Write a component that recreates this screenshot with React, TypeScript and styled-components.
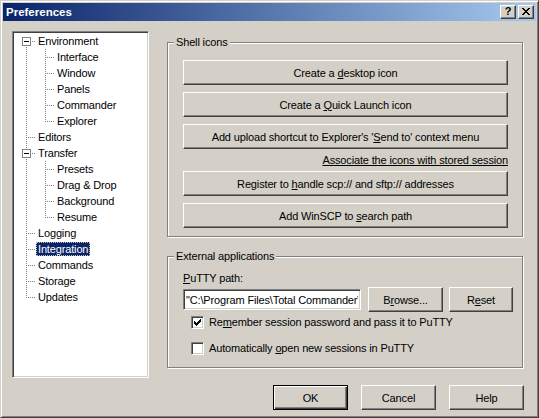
import React from "react";
import styled, { createGlobalStyle } from "styled-components";

const FACE = "#D4D0C8";
const SHADOW = "#808080";
const DARK = "#404040";

const Global = createGlobalStyle`
  html, body { margin: 0; padding: 0; background: ${FACE}; }
  body {
    font-family: "Liberation Sans", Arial, sans-serif;
    font-size: 11px;
    letter-spacing: -0.15px;
    color: #000;
  }
  * { box-sizing: border-box; }
`;

const Window = styled.div`
  width: 539px;
  height: 418px;
  background: ${FACE};
  border: 1px solid;
  border-color: ${FACE} ${DARK} ${DARK} ${FACE};
  box-shadow: inset 1px 1px #fff, inset -1px -1px ${SHADOW};
  padding: 2px;
  display: flex;
  flex-direction: column;
`;

const TitleBar = styled.div`
  height: 18px;
  flex: none;
  display: flex;
  align-items: center;
  padding: 0 2px 0 3px;
  background: linear-gradient(to right, #0a246a, #a6caf0);
`;

const Title = styled.span`
  color: #fff;
  font-weight: bold;
  font-size: 11.5px;
  letter-spacing: 0;
  line-height: 14px;
`;

const CaptionButtons = styled.div`
  margin-left: auto;
  display: flex;
  gap: 2px;
`;

const CaptionButton = styled.div`
  width: 16px;
  height: 14px;
  display: flex;
  align-items: center;
  justify-content: center;
  background: ${FACE};
  border: 1px solid;
  border-color: #fff ${DARK} ${DARK} #fff;
  box-shadow: inset -1px -1px ${SHADOW};
  font-weight: bold;
  font-size: 11px;
  letter-spacing: 0;
  line-height: 11px;
  padding-bottom: 1px;
`;

const Body = styled.div`
  flex: 1;
  display: flex;
  flex-direction: column;
`;

const Main = styled.div`
  display: flex;
  align-items: flex-start;
  gap: 18px;
  padding: 10px 13px 0 9px;
`;

const Tree = styled.div`
  width: 137px;
  height: 347px;
  flex: none;
  background: #fff;
  border: 1px solid;
  border-color: ${SHADOW} #fff #fff ${SHADOW};
  box-shadow: inset 1px 1px ${DARK}, inset -1px -1px ${FACE};
  padding: 1px 0 0 4px;
`;

const TreeRow = styled.div`
  display: flex;
  align-items: center;
  height: 16px;
`;

const Cell = styled.span<{ $up: boolean; $down: boolean; $across: boolean }>`
  position: relative;
  width: 19px;
  height: 16px;
  flex: none;

  &::before {
    content: "";
    position: absolute;
    left: 9px;
    width: 1px;
    top: ${(p) => (p.$up ? 0 : 8)}px;
    bottom: ${(p) => (p.$down ? 0 : 8)}px;
    background-image: linear-gradient(to bottom, ${SHADOW} 1px, transparent 1px);
    background-size: 1px 2px;
  }

  &::after {
    content: "";
    display: ${(p) => (p.$across ? "block" : "none")};
    position: absolute;
    left: 9px;
    right: 0;
    top: 8px;
    height: 1px;
    background-image: linear-gradient(to right, ${SHADOW} 1px, transparent 1px);
    background-size: 2px 1px;
  }
`;

const Expander = styled.span`
  position: absolute;
  left: 5px;
  top: 4px;
  width: 9px;
  height: 9px;
  z-index: 1;
  border: 1px solid ${SHADOW};
  background: linear-gradient(#000, #000) center / 5px 1px no-repeat, #fff;
`;

const NodeLabel = styled.span<{ $selected?: boolean }>`
  display: inline-block;
  padding: 0 2px;
  line-height: 14px;
  height: 14px;
  white-space: nowrap;
  color: ${(p) => (p.$selected ? "#fff" : "#000")};
  background: ${(p) => (p.$selected ? "#0a246a" : "transparent")};
  outline: ${(p) => (p.$selected ? "1px dotted #c8c0a0" : "none")};
  outline-offset: -1px;
`;

const Pages = styled.div`
  width: 356px;
  flex: none;
  margin-top: 11px;
  display: flex;
  flex-direction: column;
`;

const Group = styled.div<{ $pad: string }>`
  position: relative;
  border: 1px solid ${SHADOW};
  box-shadow: inset 1px 1px #fff, 1px 1px #fff;
  padding: ${(p) => p.$pad};
  display: flex;
  flex-direction: column;

  & + & {
    margin-top: 19px;
  }
`;

const GroupCaption = styled.span`
  position: absolute;
  top: -7px;
  left: 6px;
  padding: 0 2px;
  line-height: 13px;
  background: ${FACE};
`;

const PushButton = styled.button<{ $width?: number; $default?: boolean }>`
  height: 25px;
  width: ${(p) => (p.$width ? `${p.$width}px` : "auto")};
  flex: none;
  padding: 0;
  margin: 0;
  font: inherit;
  letter-spacing: inherit;
  color: #000;
  background: ${FACE};
  border: 1px solid;
  border-color: ${(p) => (p.$default ? "#000" : `#fff ${DARK} ${DARK} #fff`)};
  box-shadow: ${(p) =>
    p.$default
      ? `inset 1px 1px #fff, inset -1px -1px ${DARK}, inset -2px -2px ${SHADOW}`
      : `inset -1px -1px ${SHADOW}`};
  text-align: center;
  cursor: default;

  & + & {
    margin-top: 7px;
  }
`;

const LinkRow = styled.div`
  height: 22px;
  display: flex;
  align-items: center;
  justify-content: flex-end;
`;

const LinkText = styled.span`
  text-decoration: underline;
  line-height: 13px;
`;

const Key = styled.span`
  text-decoration: underline;
`;

const FieldLabel = styled.div`
  height: 13px;
  line-height: 13px;
`;

const PathRow = styled.div`
  display: flex;
  align-items: center;
  height: 25px;
  margin-top: 2px;

  & > ${PushButton} {
    margin-top: 0;
  }
`;

const PathEdit = styled.input`
  width: 178px;
  height: 21px;
  margin: 0 7px 0 0;
  padding: 0 2px;
  font: inherit;
  letter-spacing: inherit;
  color: #000;
  background: #fff;
  border: 1px solid;
  border-color: ${SHADOW} #fff #fff ${SHADOW};
  box-shadow: inset 1px 1px ${DARK}, inset -1px -1px ${FACE};
  outline: none;
`;

const ResetButton = styled(PushButton)`
  margin-left: 6px;
`;

const CheckList = styled.div`
  display: flex;
  flex-direction: column;
  gap: 9px;
  margin-top: 2px;
`;

const CheckRow = styled.label`
  display: flex;
  align-items: center;
  height: 17px;
  padding-left: 8px;
`;

const CheckBox = styled.span`
  width: 13px;
  height: 13px;
  flex: none;
  display: flex;
  align-items: center;
  justify-content: center;
  background: #fff;
  border: 1px solid;
  border-color: ${SHADOW} #fff #fff ${SHADOW};
  box-shadow: inset 1px 1px ${DARK}, inset -1px -1px ${FACE};
`;

const CheckText = styled.span`
  margin-left: 5px;
  line-height: 13px;
`;

const Footer = styled.div`
  display: flex;
  justify-content: flex-end;
  gap: 13px;
  padding: 7px 12px 0 0;

  & > ${PushButton} {
    margin-top: 0;
  }
`;

type TreeNode = {
  label: string;
  level: 0 | 1;
  expanded?: boolean;
  first?: boolean;
  last?: boolean;
  selected?: boolean;
};

const nodes: TreeNode[] = [
  { label: "Environment", level: 0, expanded: true, first: true },
  { label: "Interface", level: 1 },
  { label: "Window", level: 1 },
  { label: "Panels", level: 1 },
  { label: "Commander", level: 1 },
  { label: "Explorer", level: 1, last: true },
  { label: "Editors", level: 0 },
  { label: "Transfer", level: 0, expanded: true },
  { label: "Presets", level: 1 },
  { label: "Drag & Drop", level: 1 },
  { label: "Background", level: 1 },
  { label: "Resume", level: 1, last: true },
  { label: "Logging", level: 0 },
  { label: "Integration", level: 0, selected: true },
  { label: "Commands", level: 0 },
  { label: "Storage", level: 0 },
  { label: "Updates", level: 0, last: true },
];

const TreeItem: React.FC<{ node: TreeNode }> = ({ node }) => (
  <TreeRow>
    {node.level === 0 ? (
      <Cell $up={!node.first} $down={!node.last} $across>
        {node.expanded && <Expander />}
      </Cell>
    ) : (
      <>
        <Cell $up $down $across={false} />
        <Cell $up $down={!node.last} $across />
      </>
    )}
    <NodeLabel $selected={node.selected}>{node.label}</NodeLabel>
  </TreeRow>
);

const CheckMark = () => (
  <svg width="7" height="7" viewBox="0 0 7 7" shapeRendering="crispEdges">
    <path
      d="M0 2v3h1v1h1v1h1v-1h1v-1h1v-1h1v-1h1v-3h-1v1h-1v1h-1v1h-1v1h-1v-1h-1v-1h-1z"
      fill="#000"
    />
  </svg>
);

const CloseGlyph = () => (
  <svg width="8" height="7" viewBox="0 0 8 7" shapeRendering="crispEdges">
    <path
      d="M0 0h2v1H0z M6 0h2v1H6z M1 1h2v1H1z M5 1h2v1H5z M2 2h4v1H2z M3 3h2v1H3z M2 4h4v1H2z M1 5h2v1H1z M5 5h2v1H5z M0 6h2v1H0z M6 6h2v1H6z"
      fill="#000"
    />
  </svg>
);

export default function App() {
  return (
    <>
      <Global />
      <Window>
        <TitleBar>
          <Title>Preferences</Title>
          <CaptionButtons>
            <CaptionButton>?</CaptionButton>
            <CaptionButton>
              <CloseGlyph />
            </CaptionButton>
          </CaptionButtons>
        </TitleBar>
        <Body>
          <Main>
            <Tree>
              {nodes.map((n) => (
                <TreeItem key={n.label} node={n} />
              ))}
            </Tree>
            <Pages>
              <Group $pad="17px 14px 8px 15px">
                <GroupCaption>Shell icons</GroupCaption>
                <PushButton>
                  Create a <Key>d</Key>esktop icon
                </PushButton>
                <PushButton>
                  Create a <Key>Q</Key>uick Launch icon
                </PushButton>
                <PushButton>
                  Add upload shortcut to Explorer's '<Key>S</Key>end to' context menu
                </PushButton>
                <LinkRow>
                  <LinkText>Associate the icons with stored session</LinkText>
                </LinkRow>
                <PushButton>
                  Register to <Key>h</Key>andle scp:// and sftp:// addresses
                </PushButton>
                <PushButton>
                  Add WinSCP to <Key>s</Key>earch path
                </PushButton>
              </Group>
              <Group $pad="15px 9px 10px 15px">
                <GroupCaption>External applications</GroupCaption>
                <FieldLabel>
                  <Key>P</Key>uTTY path:
                </FieldLabel>
                <PathRow>
                  <PathEdit
                    readOnly
                    value={'"C:\\Program Files\\Total Commander\\putty.exe"'}
                  />
                  <PushButton $width={75}>
                    B<Key>r</Key>owse...
                  </PushButton>
                  <ResetButton $width={64}>
                    R<Key>e</Key>set
                  </ResetButton>
                </PathRow>
                <CheckList>
                  <CheckRow>
                    <CheckBox>
                      <CheckMark />
                    </CheckBox>
                    <CheckText>
                      Re<Key>m</Key>ember session password and pass it to PuTTY
                    </CheckText>
                  </CheckRow>
                  <CheckRow>
                    <CheckBox />
                    <CheckText>
                      Automatically <Key>o</Key>pen new sessions in PuTTY
                    </CheckText>
                  </CheckRow>
                </CheckList>
              </Group>
            </Pages>
          </Main>
          <Footer>
            <PushButton $width={75} $default>
              OK
            </PushButton>
            <PushButton $width={75}>Cancel</PushButton>
            <PushButton $width={75}>Help</PushButton>
          </Footer>
        </Body>
      </Window>
    </>
  );
}
